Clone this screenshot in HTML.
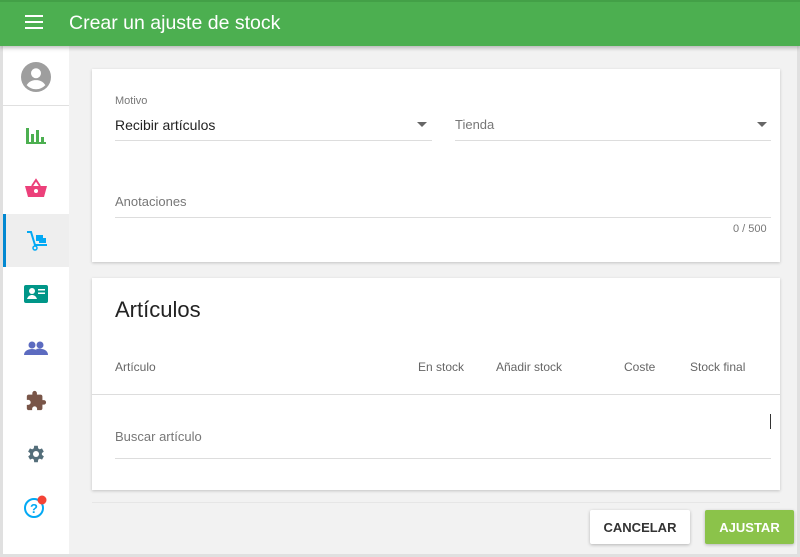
<!DOCTYPE html>
<html><head><meta charset="utf-8"><style>
*{box-sizing:border-box;margin:0;padding:0}
body{width:800px;height:557px;overflow:hidden;background:#e0e0e0;font-family:"Liberation Sans",sans-serif;position:relative}
.hdr{position:absolute;left:0;top:0;width:800px;height:46px;background:#4caf50;box-shadow:0 2px 4px rgba(0,0,0,.25);z-index:2;border-top:2px solid #43a047}
.hdr .t{position:absolute;left:69px;top:10px;color:#fff;font-size:19.5px}
.side{position:absolute;left:3px;top:46px;width:66px;height:508px;background:#fff}
.main{position:absolute;left:69px;top:46px;width:728px;height:508px;background:#f2f2f2}
.ic{position:absolute;left:0;width:66px;height:53px;display:flex;align-items:center;justify-content:center}
.card{position:absolute;left:92px;width:688px;background:#fff;box-shadow:0 1px 3px rgba(0,0,0,.2)}
.lbl{position:absolute;color:#777;font-size:13px}
.line{position:absolute;height:1px;background:#ddd}
.btn{position:absolute;top:510px;height:34px;font-size:13px;font-weight:bold;display:flex;align-items:center;justify-content:center;border-radius:2px;box-shadow:0 1px 3px rgba(0,0,0,.25)}
.th{position:absolute;top:360px;font-size:12px;color:#666}
</style></head><body>
<div class="hdr"><svg style="position:absolute;left:25px;top:13px" width="18" height="14"><rect y="0" width="18" height="2" fill="#fff"/><rect y="6" width="18" height="2" fill="#fff"/><rect y="12" width="18" height="2" fill="#fff"/></svg><div class="t">Crear un ajuste de stock</div></div>
<div class="side">
<div class="ic" style="top:2px;height:58px;border-bottom:1px solid #e0e0e0"><svg width="30" height="30" viewBox="0 0 24 24"><circle cx="12" cy="12" r="12" fill="#9e9e9e"/><circle cx="12" cy="9" r="4" fill="#fff"/><path d="M4.5 18.5c2-3 4.5-4 7.5-4s5.5 1 7.5 4c-2 2-4.5 3.3-7.5 3.3s-5.5-1.3-7.5-3.3z" fill="#fff"/></svg></div>
<div class="ic" style="top:62px"><svg width="20" height="18"><rect x="0" y="2" width="3" height="16" fill="#4caf50"/><rect x="5" y="8" width="3" height="10" fill="#4caf50"/><rect x="10" y="4" width="3" height="14" fill="#4caf50"/><rect x="15" y="11" width="3" height="7" fill="#4caf50"/><rect x="0" y="16" width="20" height="2" fill="#4caf50"/></svg></div>
<div class="ic" style="top:115px"><svg width="22" height="20" viewBox="0 0 22 20"><path d="M7 8L11 2L15 8" stroke="#ec407a" stroke-width="2" fill="none"/><path d="M0 8h22l-3 11H3z" fill="#ec407a"/><circle cx="11" cy="13" r="2" fill="#fff"/></svg></div>
<div class="ic" style="top:168px;background:#eeeeee;border-left:3px solid #0288d1"><svg width="24" height="22" viewBox="0 0 24 22"><path d="M1 2h4l4 13h12" stroke="#03a9f4" stroke-width="2" fill="none"/><rect x="10" y="5" width="7" height="6" fill="#03a9f4"/><rect x="13" y="8" width="7" height="5" fill="#03a9f4"/><circle cx="9" cy="18" r="2" fill="none" stroke="#03a9f4" stroke-width="1.5"/></svg></div>
<div class="ic" style="top:221px"><svg width="24" height="18"><rect width="24" height="18" rx="2" fill="#009688"/><circle cx="8" cy="6" r="3" fill="#fff"/><path d="M3 14c1-3 3-4 5-4s4 1 5 4z" fill="#fff"/><rect x="14" y="4" width="7" height="1.5" fill="#fff"/><rect x="14" y="7.5" width="7" height="1.5" fill="#fff"/></svg></div>
<div class="ic" style="top:275px"><svg width="24" height="14"><circle cx="8" cy="4" r="3.5" fill="#5c6bc0"/><circle cx="16" cy="4" r="3.5" fill="#5c6bc0"/><path d="M0 14c0-4 4-6 8-6s8 2 8 6z" fill="#5c6bc0"/><path d="M12 8c4-1 12 0 12 6h-8z" fill="#5c6bc0"/></svg></div>
<div class="ic" style="top:328px"><svg width="22" height="22" viewBox="0 0 24 24"><path d="M20.5 11H19V7c0-1.1-.9-2-2-2h-4V3.5a2.5 2.5 0 0 0-5 0V5H4c-1.1 0-2 .9-2 2v3.8h1.5c1.5 0 2.7 1.2 2.7 2.7S5 16.2 3.5 16.2H2V20c0 1.1.9 2 2 2h3.8v-1.5c0-1.5 1.2-2.7 2.7-2.7s2.7 1.2 2.7 2.7V22H17c1.1 0 2-.9 2-2v-4h1.5a2.5 2.5 0 0 0 0-5z" fill="#795548"/></svg></div>
<div class="ic" style="top:381px"><svg width="22" height="22" viewBox="0 0 24 24"><path d="M19.4 13a7.5 7.5 0 0 0 0-2l2.1-1.6-2-3.5-2.5 1a7 7 0 0 0-1.7-1L15 3h-4l-.4 2.9a7 7 0 0 0-1.7 1l-2.5-1-2 3.5L6.6 11a7.5 7.5 0 0 0 0 2l-2.1 1.6 2 3.5 2.5-1a7 7 0 0 0 1.7 1L11 21h4l.4-2.9a7 7 0 0 0 1.7-1l2.5 1 2-3.5z" fill="#546e7a" transform="translate(-1 0)"/><circle cx="12" cy="12" r="3.3" fill="#fff"/></svg></div>
<div class="ic" style="top:434px"><svg width="26" height="26" viewBox="0 0 26 26"><circle cx="11" cy="14" r="9" fill="none" stroke="#03a9f4" stroke-width="2"/><text x="11" y="19" font-size="13" font-weight="bold" text-anchor="middle" fill="#03a9f4" font-family="Liberation Sans">?</text><circle cx="19" cy="6" r="4.5" fill="#f44336"/></svg></div>
</div>
<div class="main"></div>
<div class="card" style="top:69px;height:193px"></div>
<div class="lbl" style="left:115px;top:95px;font-size:11px">Motivo</div>
<div class="lbl" style="left:115px;top:117px;color:#222;font-size:14px">Recibir artículos</div>
<svg style="position:absolute;left:417px;top:122px" width="10" height="5"><path d="M0 0h10L5 5z" fill="#666"/></svg>
<div class="line" style="left:115px;top:140px;width:317px"></div>
<div class="lbl" style="left:455px;top:117px;font-size:13px">Tienda</div>
<svg style="position:absolute;left:757px;top:122px" width="10" height="5"><path d="M0 0h10L5 5z" fill="#666"/></svg>
<div class="line" style="left:455px;top:140px;width:316px"></div>
<div class="lbl" style="left:115px;top:194px">Anotaciones</div>
<div class="line" style="left:115px;top:217px;width:656px"></div>
<div class="lbl" style="left:733px;top:223px;font-size:11px">0 / 500</div>
<div class="card" style="top:278px;height:212px"></div>
<div style="position:absolute;left:115px;top:297px;font-size:22px;color:#222">Artículos</div>
<div class="th" style="left:115px">Artículo</div>
<div class="th" style="left:418px">En stock</div>
<div class="th" style="left:496px">Añadir stock</div>
<div class="th" style="left:624px">Coste</div>
<div class="th" style="left:690px">Stock final</div>
<div class="line" style="left:92px;top:394px;width:688px"></div>
<div class="lbl" style="left:115px;top:429px">Buscar artículo</div>
<div style="position:absolute;left:770px;top:414px;width:1px;height:15px;background:#333"></div>
<div class="line" style="left:115px;top:458px;width:656px"></div>
<div class="line" style="left:92px;top:502px;width:688px;background:#e6e6e6"></div>
<div class="btn" style="left:590px;width:100px;background:#fff;color:#333">CANCELAR</div>
<div class="btn" style="left:705px;width:89px;background:#8bc34a;color:#fff">AJUSTAR</div>
</body></html>
